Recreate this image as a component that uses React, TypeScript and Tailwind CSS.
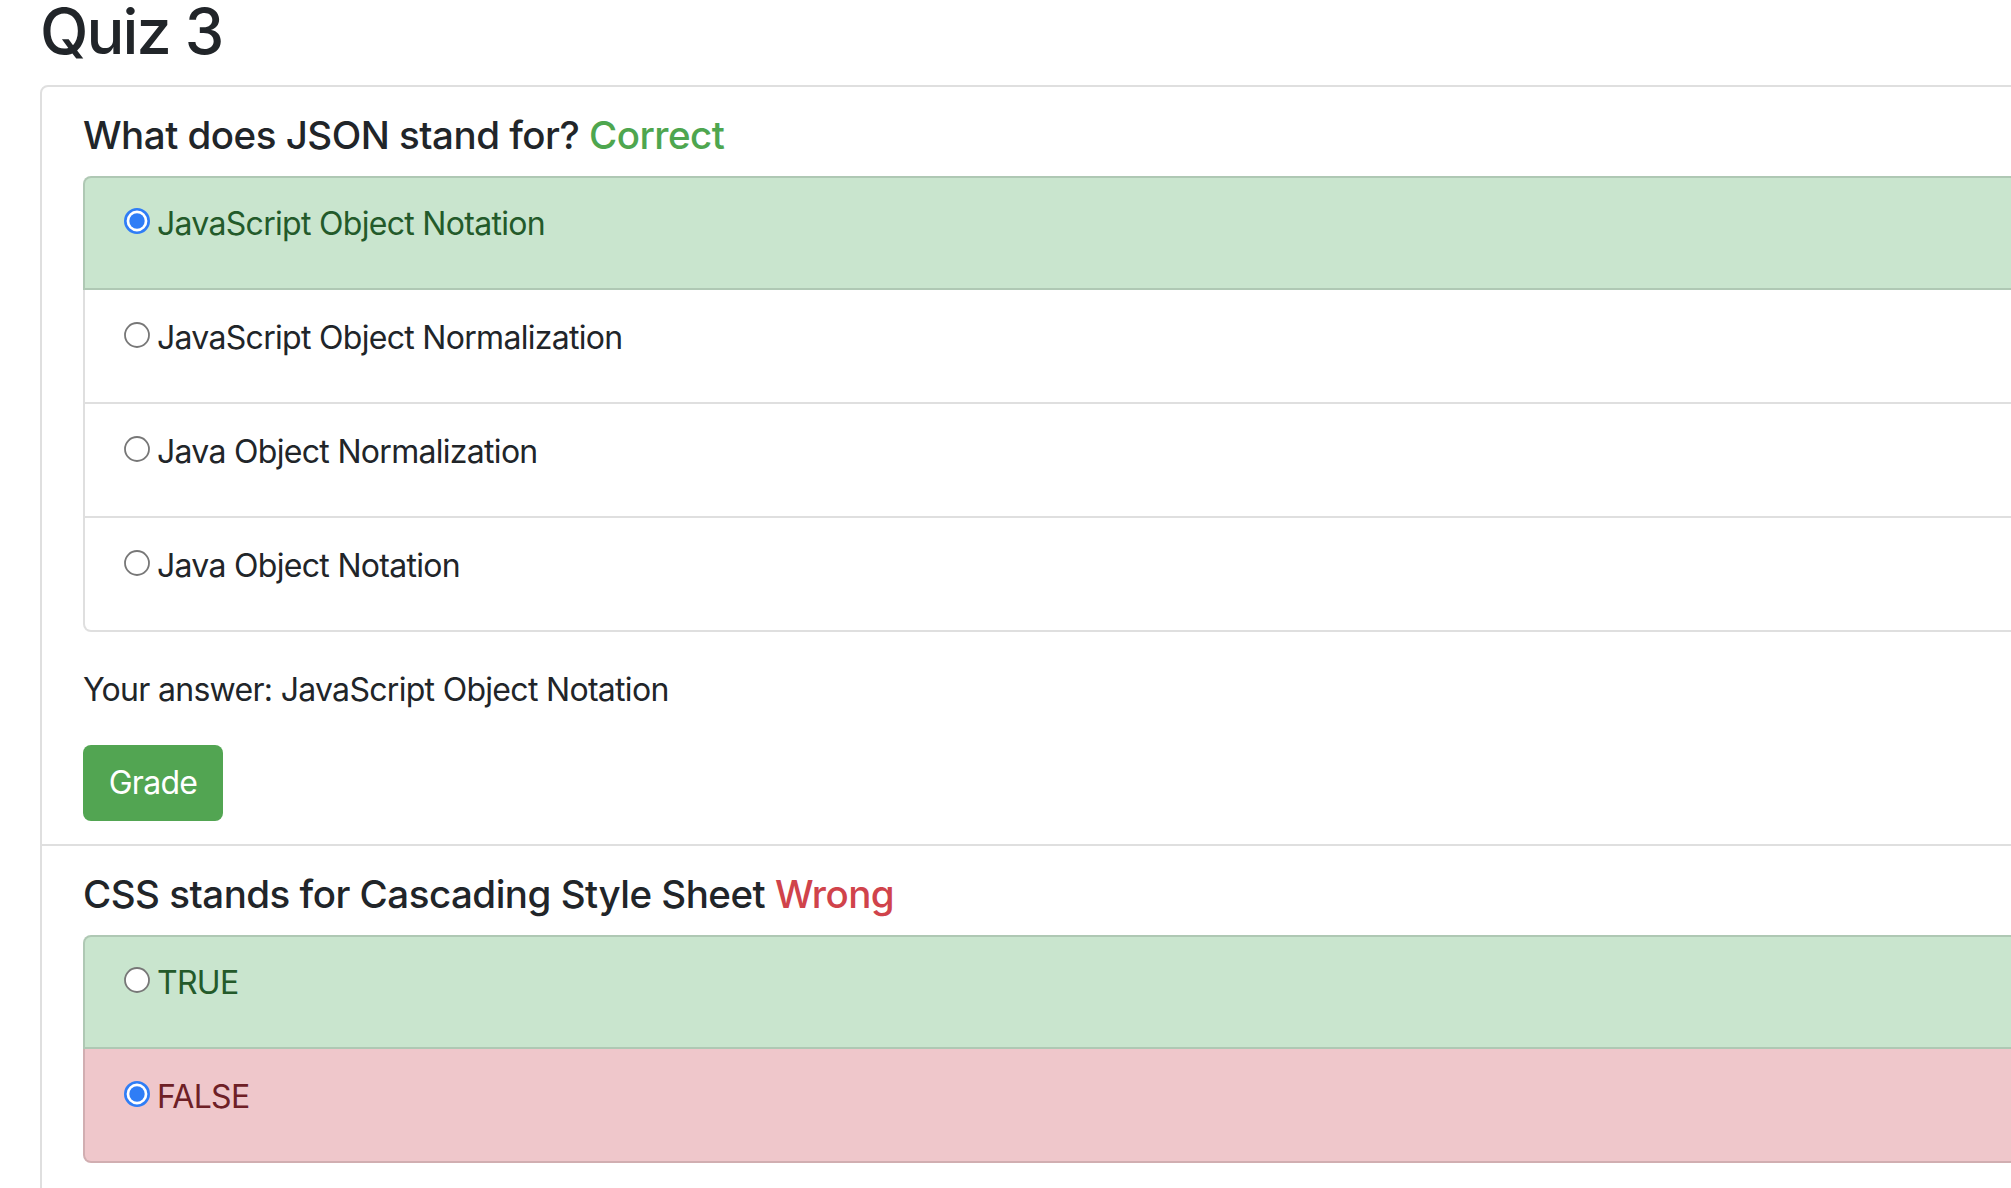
type Tone = "success" | "danger" | "plain";

type Option = {
  label: string;
  checked?: boolean;
  tone: Tone;
};

type Question = {
  title: string;
  verdict: "Correct" | "Wrong";
  options: Option[];
  answer: string;
};

const questions: Question[] = [
  {
    title: "What does JSON stand for?",
    verdict: "Correct",
    answer: "JavaScript Object Notation",
    options: [
      { label: "JavaScript Object Notation", checked: true, tone: "success" },
      { label: "JavaScript Object Normalization", tone: "plain" },
      { label: "Java Object Normalization", tone: "plain" },
      { label: "Java Object Notation", tone: "plain" },
    ],
  },
  {
    title: "CSS stands for Cascading Style Sheet",
    verdict: "Wrong",
    answer: "FALSE",
    options: [
      { label: "TRUE", tone: "success" },
      { label: "FALSE", checked: true, tone: "danger" },
    ],
  },
];

const toneClasses: Record<Tone, string> = {
  success: "bg-[#c9e5ce] text-[#235a2a]",
  danger: "bg-[#efc7cb] text-[#6e2026]",
  plain: "bg-white text-[#212529]",
};

function Radio({ checked }: { checked?: boolean }) {
  // native-looking radio, bottom edge sits just above the text baseline
  return (
    <svg width="26" height="26" viewBox="0 0 26 26" className="mr-[7px] inline align-[1px]">
      {checked ? (
        <>
          <circle cx="13" cy="13" r="11.7" fill="#fff" stroke="#2f7df6" strokeWidth="2.6" />
          <circle cx="13" cy="13" r="7.7" fill="#2f7df6" />
        </>
      ) : (
        <circle cx="13" cy="13" r="12" fill="#fff" stroke="#777" strokeWidth="1.8" />
      )}
    </svg>
  );
}

function QuestionBlock({ q }: { q: Question }) {
  return (
    <section className="border-b-2 border-[#dfdfdf] px-[41px] pt-[25px] pb-[23px]">
      <h2 className="text-[38.5px] leading-[46px] font-medium tracking-[-0.5px] text-[#212529]">
        {q.title}{" "}
        <span className={q.verdict === "Correct" ? "text-[#4ea64f]" : "text-[#d0434b]"}>
          {q.verdict}
        </span>
      </h2>

      <ul className="mt-[18px]">
        {q.options.map((opt) => (
          <li
            key={opt.label}
            className={`h-[114px] border-x-2 border-b-2 border-[rgba(0,0,0,0.125)] first:border-t-2 first:rounded-t-[8px] last:rounded-b-[8px] pl-[39px] pt-[28px] first:pt-[26px] text-[32px] leading-[40px] tracking-[-0.7px] ${toneClasses[opt.tone]}`}
          >
            <label>
              <Radio checked={opt.checked} />
              {opt.label}
            </label>
          </li>
        ))}
      </ul>

      <p className="mt-[34px] text-[32px] leading-[48px] tracking-[-0.7px] text-[#212529]">
        Your answer: {q.answer}
      </p>

      <button
        type="button"
        className="mt-[31px] flex h-[76px] w-[140px] items-center justify-center rounded-[8px] bg-[#52a552] text-[32px] tracking-[-0.7px] text-white"
      >
        Grade
      </button>
    </section>
  );
}

export default function App() {
  return (
    <div className="h-screen w-screen overflow-hidden bg-white pl-[40px] font-['Inter','Noto_Sans',sans-serif]">
      <h1 className="mb-[22px] text-[63px] leading-[63px] font-medium tracking-[-1.9px] text-[#212529]">
        Quiz 3
      </h1>

      <div className="w-[2080px] rounded-[8px] border-2 border-[#dfdfdf] bg-white">
        {questions.map((q) => (
          <QuestionBlock key={q.title} q={q} />
        ))}
      </div>
    </div>
  );
}
